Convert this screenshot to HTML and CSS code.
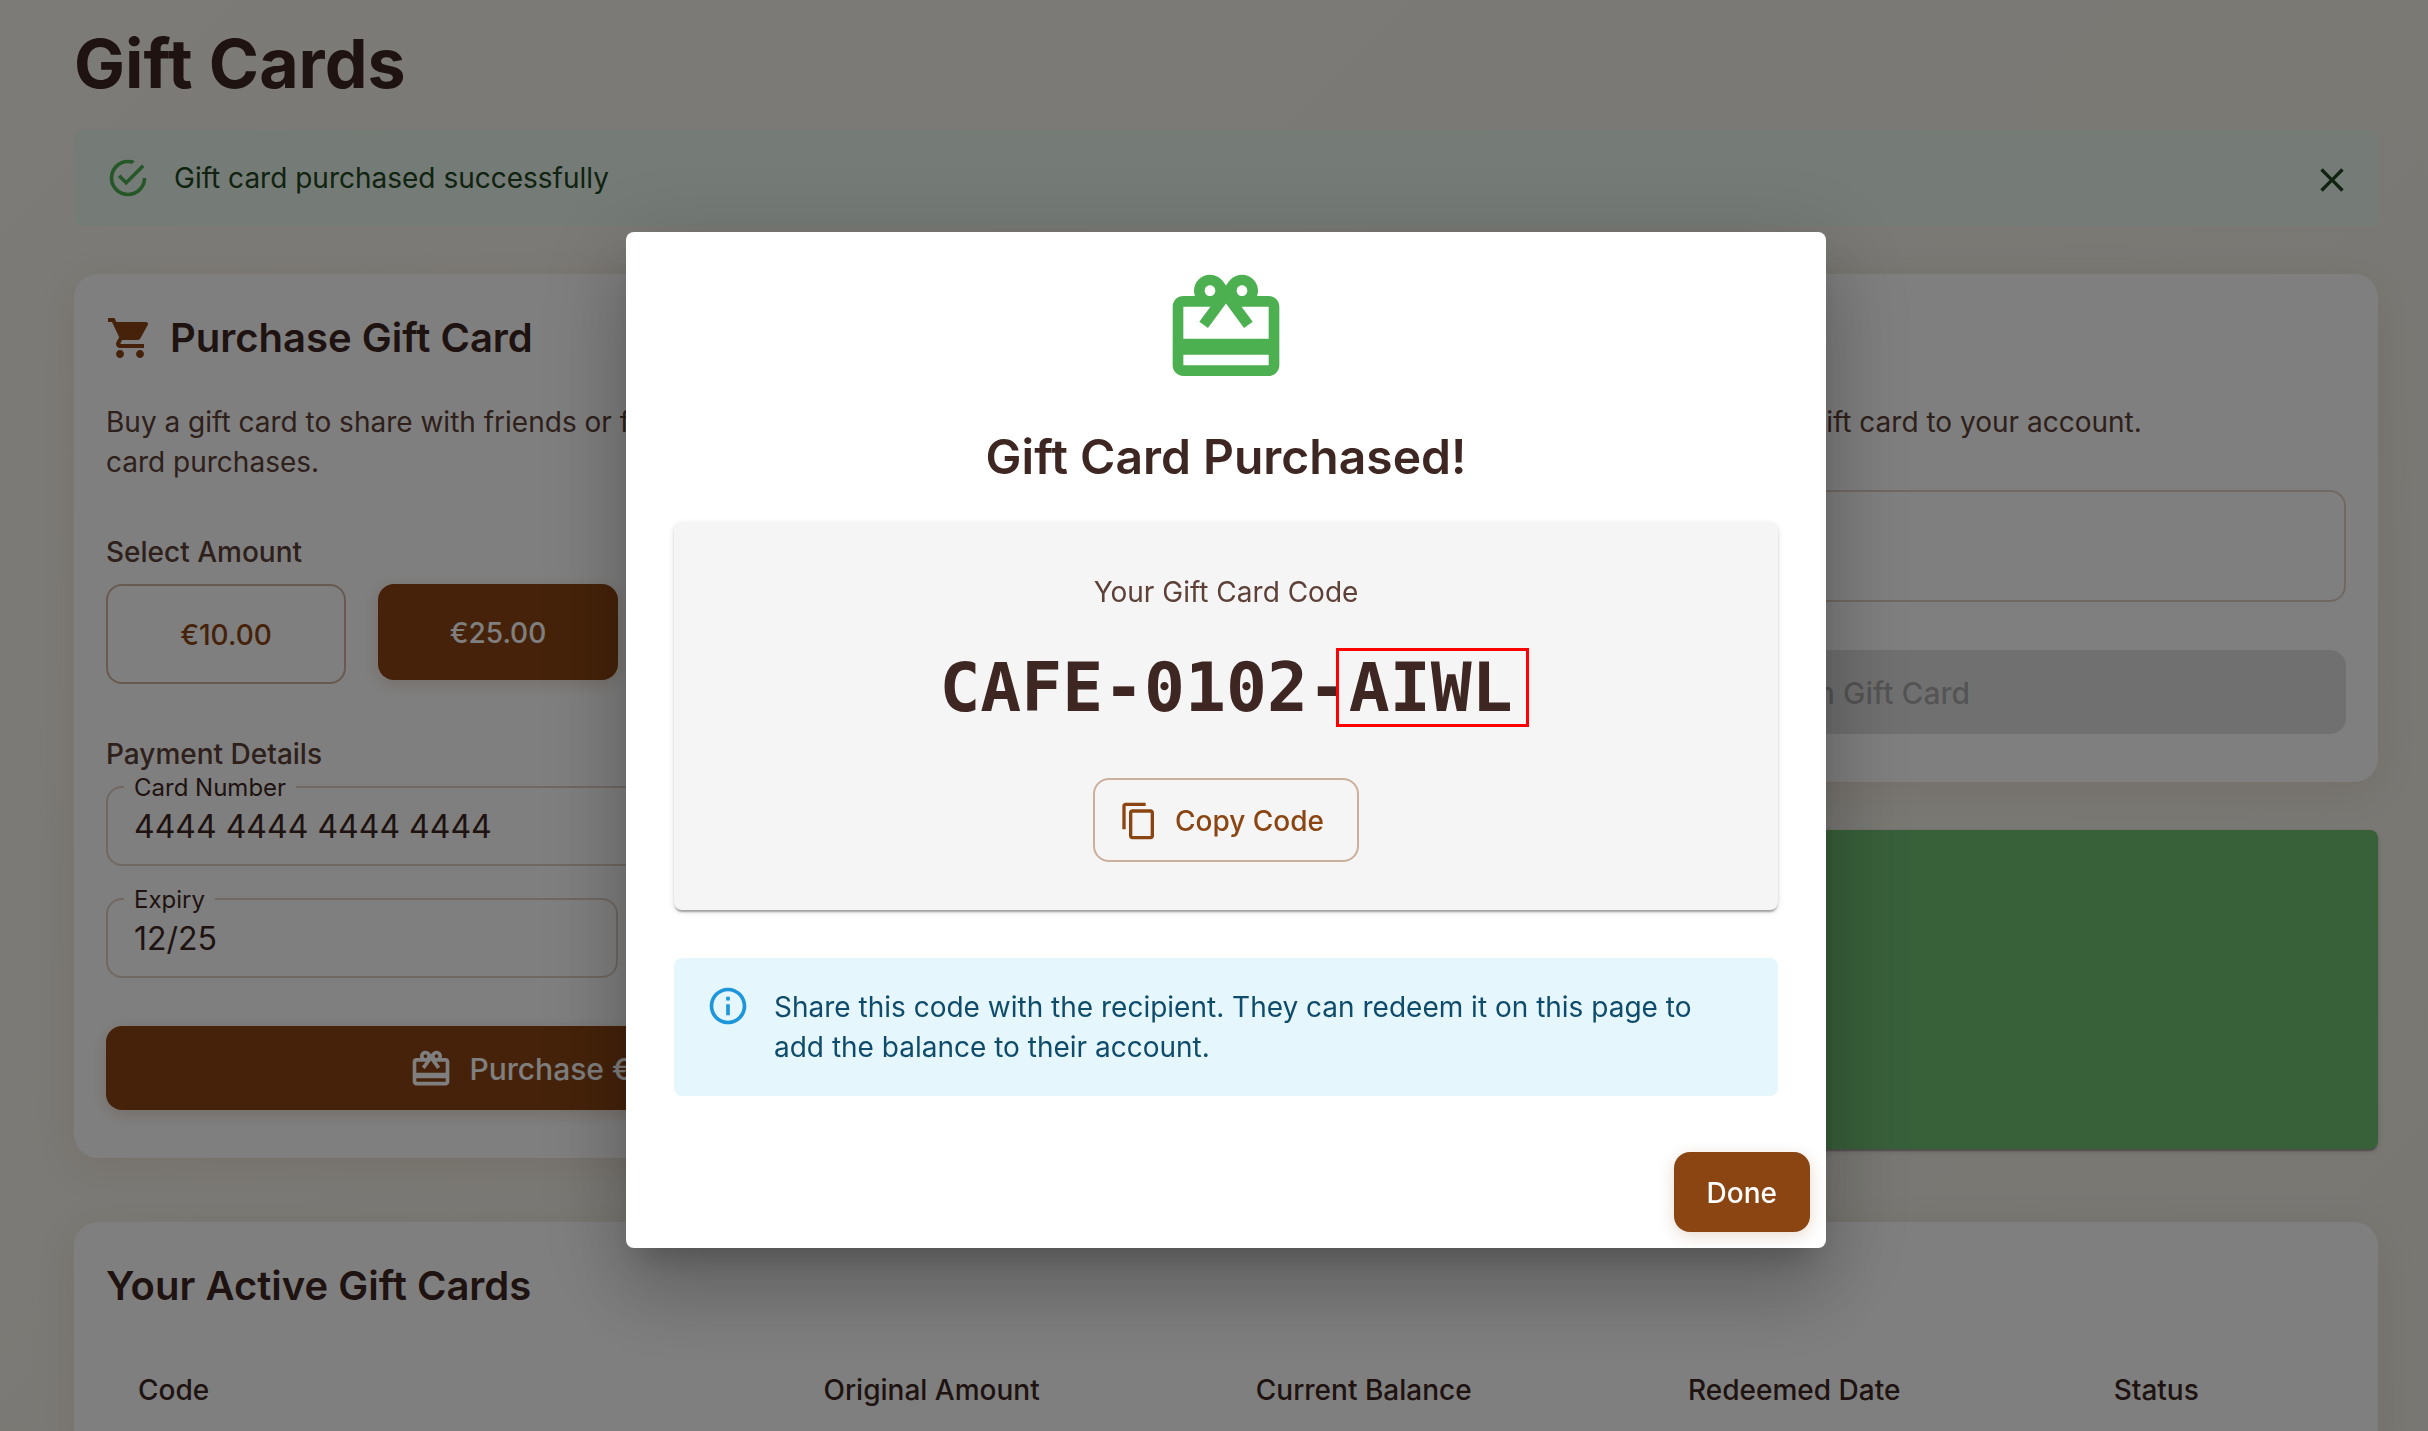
FILE: index.html
```html
<!DOCTYPE html>
<html lang="en">
<head>
<meta charset="utf-8">
<meta name="viewport" content="width=device-width, initial-scale=1">
<title>Gift Cards</title>
<link rel="stylesheet" href="styles.css">
</head>
<body>
<svg class="sprite" aria-hidden="true">
  <symbol id="redeem" viewBox="0 0 24 24"><path d="M20 6h-2.18c.11-.31.18-.65.18-1 0-1.66-1.34-3-3-3-1.05 0-1.96.54-2.5 1.35l-.5.67-.5-.68C10.96 2.54 10.05 2 9 2 7.34 2 6 3.34 6 5c0 .35.07.69.18 1H4c-1.11 0-1.99.89-1.99 2L2 19c0 1.11.89 2 2 2h16c1.11 0 2-.89 2-2V8c0-1.11-.89-2-2-2zm-5-2c.55 0 1 .45 1 1s-.45 1-1 1-1-.45-1-1 .45-1 1-1zM9 4c.55 0 1 .45 1 1s-.45 1-1 1-1-.45-1-1 .45-1 1-1zm11 15H4v-2h16v2zm0-5H4V8h5.08L7 10.83 8.62 12 11 8.76l1-1.36 1 1.36L15.38 12 17 10.83 14.92 8H20v6z"/></symbol>
</svg>

<main class="page">
  <h1 class="page-title">Gift Cards</h1>

  <div class="alert alert-success" role="status">
    <svg class="alert-icon" viewBox="0 0 24 24" aria-hidden="true"><path d="M20 12a8 8 0 0 1-8 8 8 8 0 0 1-8-8 8 8 0 0 1 8-8c.76 0 1.5.11 2.2.31l1.57-1.57A9.822 9.822 0 0 0 12 2 10 10 0 0 0 2 12a10 10 0 0 0 10 10 10 10 0 0 0 10-10M7.91 10.08 6.5 11.5 11 16 21 6l-1.41-1.42L11 13.17l-3.09-3.09z"/></svg>
    <p class="alert-message">Gift card purchased successfully</p>
    <button class="icon-button" type="button" aria-label="Close">
      <svg class="icon-s" viewBox="0 0 24 24" aria-hidden="true"><path d="M19 6.41 17.59 5 12 10.59 6.41 5 5 6.41 10.59 12 5 17.59 6.41 19 12 13.41 17.59 19 19 17.59 13.41 12z"/></svg>
    </button>
  </div>

  <div class="columns">
    <section class="card">
      <h2 class="card-title">
        <svg class="icon-l" viewBox="0 0 24 24" aria-hidden="true"><path d="M7 18c-1.1 0-1.99.9-1.99 2S5.9 22 7 22s2-.9 2-2-.9-2-2-2M1 2v2h2l3.6 7.59-1.35 2.45c-.16.28-.25.61-.25.96 0 1.1.9 2 2 2h12v-2H7.42c-.14 0-.25-.11-.25-.25l.03-.12.9-1.63h7.45c.75 0 1.41-.41 1.75-1.03l3.58-6.49c.08-.14.12-.31.12-.48 0-.55-.45-1-1-1H5.21l-.94-2zm16 16c-1.1 0-1.99.9-1.99 2s.89 2 1.99 2 2-.9 2-2-.9-2-2-2"/></svg>
        Purchase Gift Card
      </h2>
      <p class="card-text">Buy a gift card to share with friends or family. Discounts do not apply to any gift card purchases.</p>
      <h3 class="label-title">Select Amount</h3>
      <div class="amounts">
        <button class="button button-outlined amount" type="button">€10.00</button>
        <button class="button button-filled amount" type="button">€25.00</button>
        <button class="button button-outlined amount" type="button">€50.00</button>
        <button class="button button-outlined amount" type="button">€100.00</button>
      </div>
      <h3 class="label-title">Payment Details</h3>
      <div class="fields">
        <div class="field field-wide">
          <label class="field-label" for="number">Card Number</label>
          <input class="field-input" id="number" type="text" value="4444 4444 4444 4444">
        </div>
        <div class="field">
          <label class="field-label" for="expiry">Expiry</label>
          <input class="field-input" id="expiry" type="text" value="12/25">
        </div>
        <div class="field">
          <label class="field-label" for="cvv">CVV</label>
          <input class="field-input" id="cvv" type="text" value="123">
        </div>
      </div>
      <button class="button button-filled button-large" type="button">
        <svg class="icon-m" aria-hidden="true"><use href="#redeem"/></svg>
        Purchase €25.00 Gift Card
      </button>
    </section>

    <div class="stack">
      <section class="card">
        <h2 class="card-title">
          <svg class="icon-l" aria-hidden="true"><use href="#redeem"/></svg>
          Redeem Gift Card
        </h2>
        <p class="card-text">Enter any code to add the balance of a gift card to your account.</p>
        <input class="field-input field-tall" type="text" aria-label="Gift Card Code">
        <button class="button button-disabled button-large" type="button" disabled>
          <svg class="icon-m" aria-hidden="true"><use href="#redeem"/></svg>
          Redeem Gift Card
        </button>
      </section>
      <div class="balance"></div>
    </div>
  </div>

  <section class="card">
    <h2 class="card-title">Your Active Gift Cards</h2>
    <table class="table">
      <thead>
        <tr>
          <th class="col-code" scope="col">Code</th>
          <th class="col-amount" scope="col">Original Amount</th>
          <th class="col-amount" scope="col">Current Balance</th>
          <th class="col-date" scope="col">Redeemed Date</th>
          <th scope="col">Status</th>
        </tr>
      </thead>
    </table>
  </section>
</main>

<div class="overlay">
  <div class="dialog" role="dialog" aria-modal="true" aria-labelledby="dialog-title">
    <header class="dialog-header">
      <svg class="dialog-icon" aria-hidden="true"><use href="#redeem"/></svg>
      <h2 class="dialog-title" id="dialog-title">Gift Card Purchased!</h2>
    </header>
    <div class="dialog-body">
      <div class="code-panel">
        <p class="code-label">Your Gift Card Code</p>
        <p class="code">CAFE-0102-<span class="code-mark">AIWL</span></p>
        <button class="button button-outlined copy" type="button">
          <svg class="icon-s" viewBox="0 0 24 24" aria-hidden="true"><path d="M16 1H4c-1.1 0-2 .9-2 2v14h2V3h12zm3 4H8c-1.1 0-2 .9-2 2v14c0 1.1.9 2 2 2h11c1.1 0 2-.9 2-2V7c0-1.1-.9-2-2-2m0 16H8V7h11z"/></svg>
          Copy Code
        </button>
      </div>
      <div class="alert alert-info">
        <svg class="alert-icon" viewBox="0 0 24 24" aria-hidden="true"><path d="M11 7h2v2h-2zm0 4h2v6h-2zm1-9C6.48 2 2 6.48 2 12s4.480 10 10 10 10-4.480 10-10S17.520 2 12 2m0 18c-4.410 0-8-3.590-8-8s3.590-8 8-8 8 3.590 8 8-3.590 8-8 8"/></svg>
        <p class="alert-message">Share this code with the recipient. They can redeem it on this page to add the balance to their account.</p>
      </div>
    </div>
    <footer class="dialog-actions">
      <button class="button button-filled" type="button">Done</button>
    </footer>
  </div>
</div>
</body>
</html>
```
FILE: styles.css
```css
:root {
  --brown: #8b4513;
  --ink: #3e2723;
  --ink-soft: #5d4037;
  --line: rgba(139, 69, 19, 0.4);
  --line-soft: rgba(139, 69, 19, 0.25);
}

* {
  box-sizing: border-box;
}

body {
  margin: 0;
  font: 400 28px/40px Inter, sans-serif;
  color: var(--ink);
}

h1, h2, h3, p {
  margin: 0;
}

button, input {
  font: inherit;
  color: inherit;
}

svg {
  fill: currentColor;
  flex: none;
}

.sprite {
  display: none;
}

.icon-s { width: 40px; height: 40px; }
.icon-m { width: 44px; height: 44px; margin-left: -8px; }
.icon-l { width: 48px; height: 48px; color: var(--brown); }

.page {
  height: 100vh;
  overflow: hidden;
  padding: 21px 50px 0 74px;
  background: linear-gradient(135deg, #f9f6ee, #f1efe6);
}

.page-title {
  margin-bottom: 25px;
  font-size: 68px;
  line-height: 84px;
  font-weight: 700;
}

/* Alerts */
.alert {
  display: flex;
  align-items: flex-start;
  padding: 12px 32px;
  border-radius: 8px;
}

.alert-icon {
  width: 44px;
  height: 44px;
  margin: 14px 24px 14px 0;
}

.alert-message {
  flex: 1;
  padding: 16px 0;
}

.alert-success {
  margin-bottom: 48px;
  padding-right: 16px;
  background: #ebf6ef;
  color: #1e4620;
}

.alert-success .alert-icon { color: #4caf50; }

.alert-info {
  margin-top: 48px;
  background: #e5f6fd;
  color: #0f4c6b;
}

.alert-info .alert-icon { color: #1e96db; }
.alert-info .alert-message { padding: 17px 0; }

.icon-button {
  display: flex;
  padding: 10px;
  margin-top: 8px;
  border: 0;
  background: none;
}

/* Cards */
.columns {
  display: grid;
  grid-template-columns: 1fr 1fr;
  align-items: start;
  gap: 64px;
  margin-bottom: 64px;
}

.stack {
  display: grid;
  gap: 48px;
}

.card {
  padding: 32px 32px 48px;
  border-radius: 24px;
  background: #fff;
  box-shadow: 0 8px 40px rgba(139, 69, 19, 0.1);
}

.card-title {
  display: flex;
  align-items: center;
  gap: 16px;
  font-size: 40px;
  line-height: 64px;
  font-weight: 600;
}

.card-text {
  margin: 32px 0 48px;
  color: var(--ink-soft);
}

.label-title {
  margin-bottom: 10px;
  color: var(--ink-soft);
  font-size: 28px;
  line-height: 44px;
  font-weight: 500;
}

.balance {
  height: 319px;
  border-radius: 8px;
  background: #70c073;
  box-shadow: 0 4px 2px -2px rgba(0, 0, 0, 0.2), 0 2px 2px rgba(0, 0, 0, 0.14), 0 2px 6px rgba(0, 0, 0, 0.12);
}

/* Buttons */
.button {
  display: flex;
  align-items: center;
  justify-content: center;
  gap: 16px;
  min-height: 80px;
  padding: 2px 33px 0;
  border: 0;
  border-radius: 16px;
  font-weight: 500;
}

.button-filled {
  background: var(--brown);
  color: #fff;
  box-shadow: 0 4px 16px rgba(139, 69, 19, 0.2);
}

.button-outlined {
  border: 2px solid var(--line);
  background: none;
  color: var(--brown);
}

.button-large {
  width: 100%;
  min-height: 84px;
  font-size: 30px;
}

.button-disabled {
  background: rgba(0, 0, 0, 0.12);
  color: rgba(0, 0, 0, 0.26);
}

.amounts {
  display: grid;
  grid-template-columns: repeat(4, 1fr);
  align-items: start;
  gap: 32px;
  margin-bottom: 48px;
}

.amount { min-height: 96px; }
.amount.button-outlined { min-height: 100px; }

/* Fields */
.fields {
  display: grid;
  grid-template-columns: 1fr 1fr;
  gap: 32px;
  margin-bottom: 48px;
}

.field {
  position: relative;
}

.field-wide {
  grid-column: 1 / -1;
}

.field-label {
  position: absolute;
  top: -16px;
  left: 18px;
  padding: 0 10px;
  background: #fff;
  font-size: 24px;
  line-height: 36px;
}

.field-input {
  display: block;
  width: 100%;
  height: 80px;
  padding: 0 26px;
  border: 2px solid var(--line-soft);
  border-radius: 16px;
  background: none;
  font-size: 32px;
}

.field-tall {
  height: 112px;
  margin-bottom: 48px;
}

/* Table */
.table {
  width: 100%;
  margin-top: 16px;
  border-collapse: collapse;
  table-layout: fixed;
}

.table th {
  padding: 32px;
  border-bottom: 2px solid #e0e0e0;
  line-height: 48px;
  font-weight: 500;
  text-align: left;
}

.table .col-code { width: 30.6%; }
.table .col-amount { width: 19.3%; }
.table .col-date { width: 19%; }

/* Dialog */
.overlay {
  position: fixed;
  inset: 0;
  display: flex;
  align-items: flex-start;
  justify-content: center;
  /* same side difference as the page, so the dialog sits centred over its content */
  padding: 232px 64px 64px 88px;
  background: rgba(0, 0, 0, 0.5);
}

.dialog {
  width: 100%;
  max-width: 1200px;
  border-radius: 8px;
  background: #fff;
  box-shadow: 0 22px 30px -14px rgba(0, 0, 0, 0.2), 0 48px 76px 6px rgba(0, 0, 0, 0.14), 0 18px 92px 16px rgba(0, 0, 0, 0.12);
}

.dialog-header {
  display: flex;
  flex-direction: column;
  align-items: center;
  gap: 33px;
  padding: 32px 48px 33px;
}

.dialog-icon {
  width: 128px;
  height: 128px;
  color: #4caf50;
}

.dialog-title {
  font-size: 48px;
  line-height: 64px;
  font-weight: 600;
}

.dialog-body {
  padding: 0 48px 40px;
}

.code-panel {
  display: flex;
  flex-direction: column;
  align-items: center;
  padding: 50px 48px 48px;
  border-radius: 8px;
  background: #f5f5f5;
  box-shadow: 0 4px 2px -2px rgba(0, 0, 0, 0.2), 0 2px 2px rgba(0, 0, 0, 0.14), 0 2px 6px rgba(0, 0, 0, 0.12);
}

.code-label {
  color: var(--ink-soft);
}

.code {
  margin: 34px 0 48px;
  font: 700 68px/84px "DejaVu Sans Mono", monospace;
}

.code-mark {
  position: relative;
}

.code-mark::after {
  content: "";
  position: absolute;
  inset: 0 -16px 0 -13px;
  border: 3px solid #f00;
}

.copy {
  min-height: 84px;
  padding: 2px 33px 0 24px;
}

.dialog-actions {
  display: flex;
  justify-content: flex-end;
  padding: 16px;
}
```
